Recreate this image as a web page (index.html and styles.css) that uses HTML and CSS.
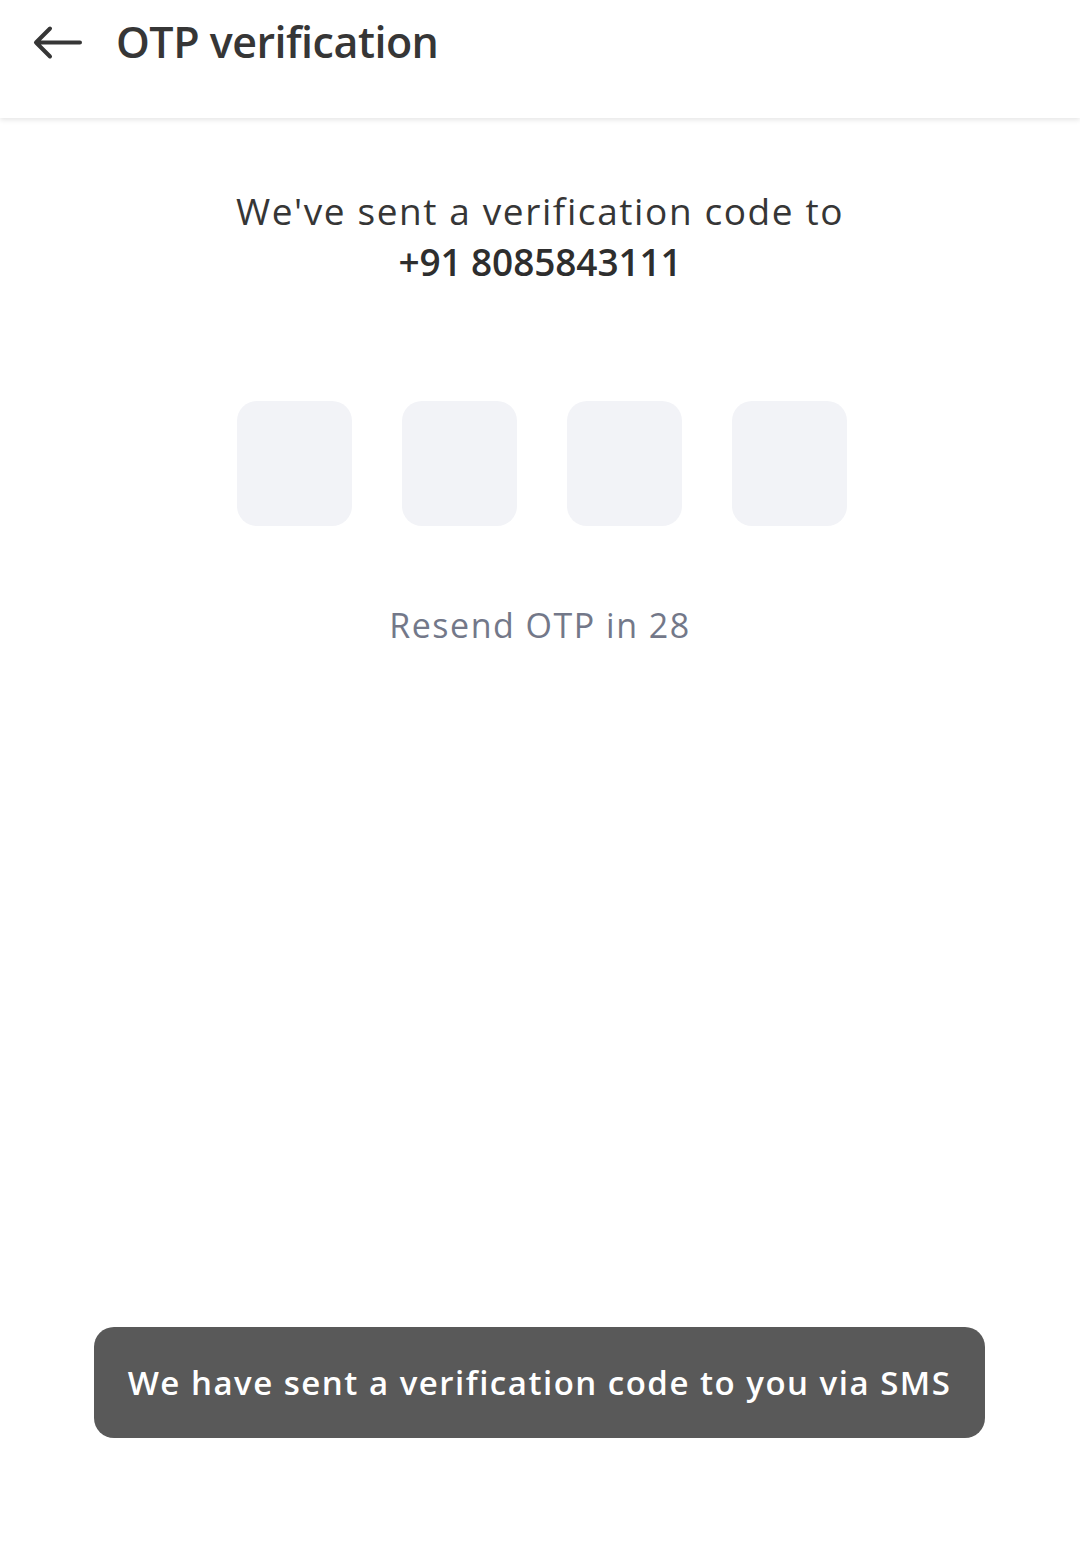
FILE: index.html
```html
<!DOCTYPE html>
<html>
<head>
<meta charset="utf-8">
<link rel="stylesheet" href="styles.css">
</head>
<body>
<div class="screen">
  <header class="topbar">
    <svg class="back" width="52" height="40" viewBox="0 0 52 40">
      <path d="M49 19.5 H5 M19 5.5 L5 19.5 L19 33.5" fill="none" stroke="#363636" stroke-width="4" stroke-linecap="round" stroke-linejoin="round"/>
    </svg>
    <h1 class="title">OTP verification</h1>
  </header>
  <main class="content">
    <p class="sent">We've sent a verification code to</p>
    <p class="phone">+91 8085843111</p>
    <div class="otp">
      <div class="box"></div>
      <div class="box"></div>
      <div class="box"></div>
      <div class="box"></div>
    </div>
    <p class="resend">Resend OTP in 28</p>
  </main>
  <div class="toast">We have sent a verification code to you via SMS</div>
</div>
</body>
</html>
```
FILE: styles.css
```css
html, body {
  margin: 0;
  padding: 0;
  background: #ffffff;
}
body {
  font-family: "Open Sans", "Noto Sans", sans-serif;
  color: #363636;
}
.screen {
  width: 1080px;
  height: 1566px;
  display: flex;
  flex-direction: column;
  overflow: hidden;
}
.topbar {
  height: 118px;
  box-sizing: border-box;
  display: flex;
  align-items: flex-start;
  padding: 20px 0 0 31px;
  box-shadow: 0 2px 5px rgba(0,0,0,0.10);
  position: relative;
  z-index: 1;
}
.back {
  display: block;
  margin-top: 3px;
}
.title {
  margin: 0 0 0 33px;
  font-size: 43px;
  font-weight: 600;
  line-height: 44px;
  letter-spacing: -0.5px;
  color: #363636;
}
.content {
  display: flex;
  flex-direction: column;
  align-items: center;
  padding-top: 70px;
}
.sent {
  margin: 0;
  font-size: 37px;
  line-height: 46px;
  font-weight: 400;
  letter-spacing: 1.6px;
  color: #363636;
}
.phone {
  margin: 5px 0 0 0;
  font-size: 37px;
  line-height: 46px;
  font-weight: 600;
  letter-spacing: -0.1px;
  color: #2e2e2e;
}
.otp {
  display: flex;
  gap: 50px;
  margin-top: 116px;
  margin-left: 4px;
}
.box {
  width: 115px;
  height: 125px;
  border-radius: 20px;
  background: #f2f3f7;
}
.resend {
  margin: 77px 0 0 0;
  font-size: 34px;
  line-height: 44px;
  letter-spacing: 1.5px;
  color: #737889;
}
.toast {
  margin: auto 0 128px 94px;
  width: 891px;
  height: 111px;
  box-sizing: border-box;
  border-radius: 20px;
  background: #595959;
  color: #ffffff;
  font-size: 33px;
  font-weight: 600;
  display: flex;
  align-items: center;
  justify-content: center;
  letter-spacing: 1.5px;
}
```
